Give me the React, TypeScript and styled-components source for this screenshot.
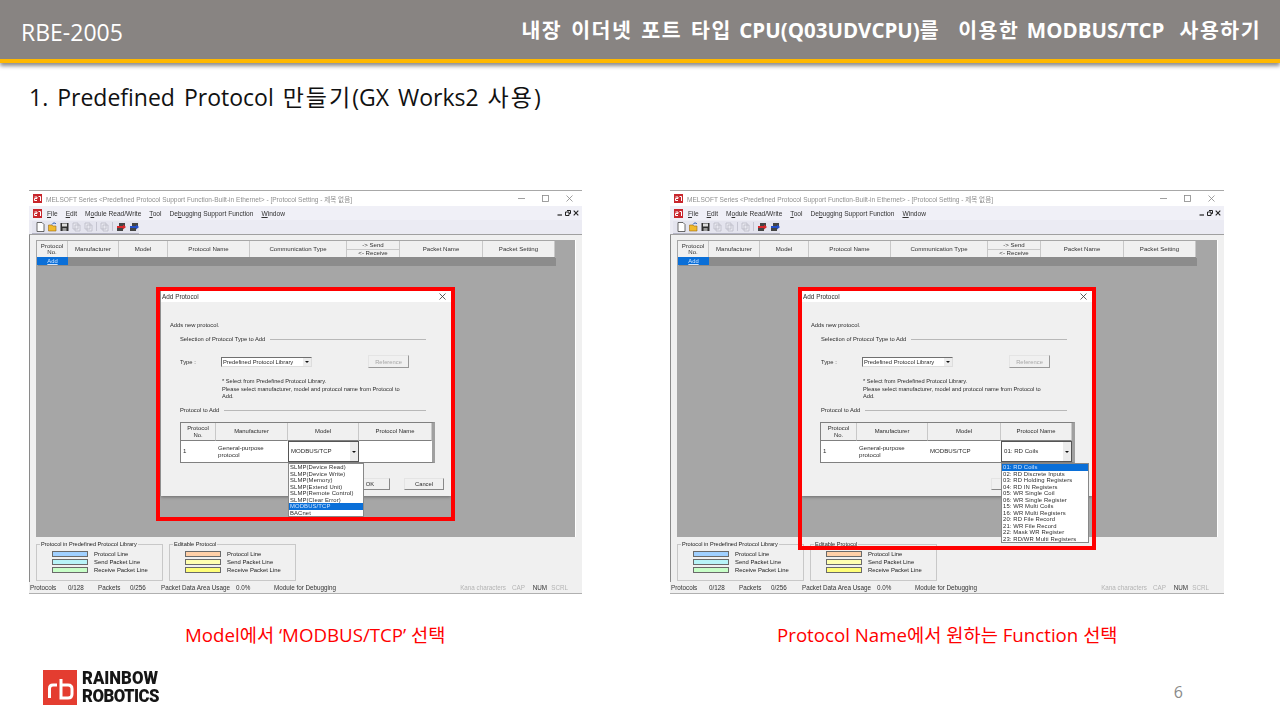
import React from 'react'
import styled, { createGlobalStyle } from 'styled-components'

const GlobalStyle = createGlobalStyle`
  html, body {
    margin: 0;
    padding: 0;
    background: #fff;
  }
  body {
    font-family: 'Open Sans', 'Noto Sans CJK KR', sans-serif;
  }
`

const Slide = styled.div`
  width: 1280px;
  height: 720px;
  overflow: hidden;
  display: flex;
  flex-direction: column;
`

const Header = styled.header`
  height: 59px;
  flex: none;
  background: #888482;
  border-bottom: 4px solid #ffb800;
  box-shadow: 0 3px 4px rgba(0, 0, 0, 0.45);
  display: flex;
  align-items: center;
  justify-content: space-between;
  padding: 0 19px 0 21px;
  color: #fff;
`

const DocCode = styled.div`
  font-size: 23px;
  margin-top: 4px;
`

const DocTitle = styled.div`
  font-size: 20.5px;
  font-weight: 700;
  margin-top: -2px;
  word-spacing: 2.2px;
  white-space: pre;
`

const Hangul = styled.span<{ $gap: number }>`
  letter-spacing: ${(p) => p.$gap}px;
`

const Heading = styled.h1`
  margin: 18px 0 0 29px;
  height: 32px;
  font-size: 23px;
  line-height: 32px;
  font-weight: 400;
  word-spacing: 3px;
  color: #111;
  white-space: pre;
`

const Figures = styled.main`
  margin-top: 77px;
  padding-left: 29px;
  display: flex;
  gap: 88px;
`

const Column = styled.section`
  display: flex;
  flex-direction: column;
`

const Shot = styled.div`
  position: relative;
`

const RedBox = styled.div<{ $tall?: boolean }>`
  position: absolute;
  left: ${(p) => (p.$tall ? 128 : 127)}px;
  top: 97px;
  width: ${(p) => (p.$tall ? 298 : 299)}px;
  height: ${(p) => (p.$tall ? 263 : 234)}px;
  border: 4px solid #ff0000;
  box-sizing: border-box;
`

const Caption = styled.p<{ $shift: number }>`
  margin: 29px 0 0 ${(p) => p.$shift}px;
  font-size: 18.7px;
  line-height: 24px;
  color: #ff0000;
  white-space: pre;
`

const Footer = styled.footer`
  margin-top: 22px;
  padding: 0 97px 0 43px;
  display: flex;
  align-items: center;
  justify-content: space-between;
`

const Logo = styled.div`
  display: flex;
  align-items: center;
  gap: 5px;
`

const LogoWords = styled.div`
  font-family: Roboto, 'Liberation Sans', sans-serif;
  font-weight: 900;
  font-size: 19px;
  line-height: 18px;
  color: #161616;
  transform: scaleX(0.88);
  transform-origin: left center;
`

const LogoLine = styled.div<{ $tight?: boolean }>`
  letter-spacing: ${(p) => (p.$tight ? -0.6 : 0)}px;
`

const PageNo = styled.div`
  font-size: 16px;
  color: #8a8a8a;
  margin-top: 10px;
`

/* captured MELSOFT window */

const Win = styled.div<{ $w: number }>`
  width: ${(p) => p.$w}px;
  height: 404px;
  display: flex;
  flex-direction: column;
  background: #f0f0f0;
  font-family: 'Liberation Sans', 'Noto Sans CJK KR', sans-serif;
  font-size: 6px;
  color: #222;
  border-top: 1px solid #a8a8a8;
  box-sizing: border-box;
  filter: blur(0.38px);
  white-space: nowrap;
`

const TitleBar = styled.div`
  height: 15px;
  flex: none;
  background: #fff;
  display: flex;
  align-items: center;
  padding: 0 9px 0 4px;
  gap: 4px;
  color: #909090;
  font-size: 6.55px;
`

const TitleText = styled.span`
  flex: 1;
`

const WinControls = styled.div`
  display: flex;
  gap: 17px;
`

const MenuBar = styled.div`
  height: 14px;
  flex: none;
  background: #f0f0f7;
  display: flex;
  align-items: center;
  padding: 0 3px 0 4px;
  font-size: 6.6px;
  color: #333;
`

const MenuItems = styled.div`
  flex: 1;
  display: flex;
  gap: 8px;
  margin-left: 5px;
`

const MdiControls = styled.div`
  display: flex;
  gap: 2px;
`

const ToolRow = styled.div`
  height: 15px;
  flex: none;
  background: #ebebf3;
  border-bottom: 1px solid #a0a0a0;
  box-sizing: border-box;
  display: flex;
  align-items: center;
  padding-left: 3px;
`

const ToolPill = styled.div`
  height: 13px;
  width: 107px;
  background: #e4e4ee;
  border-bottom: 1px solid #b4b4c4;
  box-sizing: border-box;
  display: flex;
  align-items: center;
  gap: 3px;
  padding-left: 4px;
`

const ToolSep = styled.span`
  width: 1px;
  height: 9px;
  background: #c4c4d0;
`

const Main = styled.div`
  flex: 1;
  min-height: 0;
  display: flex;
  padding: 5px 6px 0 6px;
  border-left: 1px solid #8a8a8a;
`

const Mdi = styled.div`
  position: relative;
  flex: 1;
  background: #a6a6a6;
  border-right: 1px solid #fff;
  padding-top: 1px;
`

const GridHead = styled.div`
  width: 518px;
  margin-left: 1px;
  height: 16px;
  display: flex;
  background: #f0f0f0;
`

const GridCol = styled.div<{ $w: number }>`
  width: ${(p) => p.$w}px;
  flex: none;
  box-sizing: border-box;
  border-right: 1px solid #c8c8c8;
  display: flex;
  flex-direction: column;
  align-items: center;
  justify-content: center;
  text-align: center;
  font-size: 6.1px;
  line-height: 6.4px;
  color: #333;
`

const SplitCell = styled.div`
  flex: 1;
  width: 100%;
  display: flex;
  align-items: center;
  justify-content: center;
  & + & {
    border-top: 1px solid #c8c8c8;
  }
`

const GridRow = styled.div`
  width: 518px;
  margin-left: 1px;
  height: 8px;
  display: flex;
  background: #8c8c8c;
  box-shadow: 1px 1px 0 #8c8c8c;
`

const AddCell = styled.div`
  width: 31px;
  background: #0a6fd8;
  color: #cfe4ff;
  text-align: center;
  font-size: 5.8px;
  line-height: 8px;
  text-decoration: underline;
`

const Dialog = styled.div`
  position: absolute;
  left: 125px;
  top: 50px;
  width: 290px;
  height: 206px;
  background: #f0f0f0;
  box-shadow: 0 1px 3px rgba(0, 0, 0, 0.35);
  color: #2c2c2c;
  font-size: 5.8px;
`

const DialogTitle = styled.div`
  height: 12px;
  background: #fff;
  display: flex;
  align-items: center;
  justify-content: space-between;
  padding: 0 5px 0 1px;
  font-size: 6.4px;
`

const DialogBody = styled.div`
  padding: 19px 7px 0 9px;
`

const Intro = styled.div`
  height: 8px;
  line-height: 8px;
`

const SectionTitle = styled.div<{ $top: number }>`
  height: 8px;
  line-height: 8px;
  margin: ${(p) => p.$top}px 18px 0 10px;
  display: flex;
  align-items: center;
  gap: 5px;
  &::after {
    content: '';
    flex: 1;
    height: 1px;
    background: #b8b8b8;
  }
`

const TypeRow = styled.div`
  margin: 13px 0 0 10px;
  height: 11px;
  display: flex;
  align-items: center;
`

const TypeLabel = styled.span`
  width: 41px;
`

const SelectBox = styled.div`
  width: 91px;
  height: 10px;
  background: #fff;
  box-sizing: border-box;
  border: 1px solid #707070;
  border-right-color: #ddd;
  border-bottom-color: #ddd;
  display: flex;
  align-items: center;
  justify-content: space-between;
  padding-left: 1px;
`

const Arrow = styled.span`
  width: 8px;
  height: 8px;
  background: #ececec;
  display: flex;
  align-items: center;
  justify-content: center;
  &::after {
    content: '';
    border: 2px solid transparent;
    border-top: 2.5px solid #111;
    border-bottom: 0;
  }
`

const RefButton = styled.div`
  width: 41px;
  height: 13px;
  margin-left: 56px;
  box-sizing: border-box;
  background: #f0f0f0;
  border: 1px solid #e4e4e4;
  border-right-color: #999;
  border-bottom-color: #999;
  color: #a8a8a8;
  display: flex;
  align-items: center;
  justify-content: center;
`

const Note = styled.div`
  margin: 11px 0 0 52px;
  font-size: 5.7px;
  line-height: 7.5px;
  white-space: pre;
`

const ProtoTable = styled.div<{ $left: number; $cols: string }>`
  margin: 8px 0 0 ${(p) => p.$left}px;
  width: 255px;
  height: 41px;
  box-sizing: border-box;
  border: 1px solid #808080;
  border-right: 3px solid #a0a0a0;
  display: grid;
  grid-template-columns: ${(p) => p.$cols};
  grid-template-rows: 18px 1fr;
  background: #fff;
`

const ProtoHead = styled.div`
  background: #f0f0f0;
  border-right: 1px solid #c8c8c8;
  border-bottom: 1px solid #808080;
  display: flex;
  align-items: center;
  justify-content: center;
  text-align: center;
  line-height: 6.4px;
  font-size: 5.9px;
`

const ProtoCell = styled.div`
  position: relative;
  display: flex;
  align-items: center;
  padding: 0 2px;
  line-height: 6.6px;
  font-size: 6.1px;
`

const Combo = styled.div`
  flex: 1;
  align-self: stretch;
  margin: 0 -2px;
  box-sizing: border-box;
  border: 1px solid #555;
  display: flex;
  align-items: center;
  justify-content: space-between;
  padding-left: 2px;
  & > span:last-child {
    width: 8px;
    height: 100%;
  }
`

const DropList = styled.ul<{ $w: number }>`
  position: absolute;
  left: 0;
  top: calc(100% + 1px);
  width: ${(p) => p.$w}px;
  margin: 0;
  padding: 0;
  list-style: none;
  background: #fff;
  border: 1px solid #888;
  box-sizing: border-box;
  z-index: 2;
  font-size: 5.9px;
  letter-spacing: 0.12px;
`

const DropItem = styled.li<{ $on?: boolean }>`
  height: 6.5px;
  line-height: 6.5px;
  padding-left: 1px;
  background: ${(p) => (p.$on ? '#0a6fd8' : 'transparent')};
  color: ${(p) => (p.$on ? '#cfe4ff' : '#2c2c2c')};
`

const DialogButtons = styled.div`
  margin-top: 15px;
  display: flex;
  justify-content: flex-end;
  gap: 14px;
`

const PushButton = styled.div`
  width: 40px;
  height: 12px;
  box-sizing: border-box;
  border: 1px solid #e4e4e4;
  border-right-color: #888;
  border-bottom-color: #888;
  display: flex;
  align-items: center;
  justify-content: center;
`

const DialogX = styled.svg`
  width: 7px;
  height: 7px;
`

const Legend = styled.div`
  height: 45px;
  flex: none;
  display: flex;
  gap: 6px;
  padding: 7px 0 0 6px;
  box-sizing: border-box;
  border-left: 1px solid #8a8a8a;
  font-size: 5.9px;
`

const GroupBox = styled.div`
  position: relative;
  width: 127px;
  height: 37px;
  box-sizing: border-box;
  border: 1px solid #c8c8c8;
  padding: 6px 0 0 15px;
  display: flex;
  flex-direction: column;
  gap: 2px;
`

const GroupLabel = styled.span`
  position: absolute;
  left: 3px;
  top: -4px;
  padding: 0 1px;
  font-size: 5.6px;
  line-height: 7px;
  background: #f0f0f0;
`

const LegendRow = styled.div`
  height: 6px;
  display: flex;
  align-items: center;
  gap: 6px;
`

const Swatch = styled.span<{ $color: string }>`
  width: 36px;
  height: 6px;
  box-sizing: border-box;
  border: 1px solid #6a6a6a;
  background: ${(p) => p.$color};
`

const StatusBar = styled.div`
  height: 11px;
  flex: none;
  display: flex;
  align-items: center;
  padding-left: 1px;
  border-bottom: 1px solid #b0b0b0;
  font-size: 6.3px;
  color: #555;
`

const StatusCell = styled.span<{ $w: number; $off?: boolean; $right?: boolean }>`
  width: ${(p) => p.$w}px;
  flex: none;
  color: ${(p) => (p.$off ? '#b4b4b4' : '#333')};
  text-align: ${(p) => (p.$right ? 'right' : 'left')};
`

const Underlined = styled.span`
  text-decoration: underline;
`

const MelsoftMark = () => (
  <svg width="9" height="9" viewBox="0 0 9 9">
    <rect width="9" height="9" fill="#c8262c" />
    <path d="M1.5 3H4V4.5H1.5V6.5H4M5.5 2.5H7.5V7" stroke="#fff" strokeWidth="1" fill="none" />
  </svg>
)

const ToolIcon = ({ kind }: { kind: string }) => {
  if (kind === 'new')
    return (
      <svg width="9" height="10" viewBox="0 0 9 10">
        <path d="M1 .5H6L8 2.5V9.5H1Z" fill="#fff" stroke="#444" strokeWidth=".8" />
      </svg>
    )
  if (kind === 'open')
    return (
      <svg width="9" height="10" viewBox="0 0 9 10">
        <path d="M.5 3H4L5 4H8V9H.5Z" fill="#f0b92c" stroke="#9a6a10" strokeWidth=".6" />
        <path d="M4 2.5C5 .5 7 .5 8 2" stroke="#2a5fb4" fill="none" />
      </svg>
    )
  if (kind === 'save')
    return (
      <svg width="9" height="10" viewBox="0 0 9 10">
        <rect x=".5" y="1" width="8" height="8" fill="#2e2e2e" />
        <rect x="2" y="1.5" width="5" height="3" fill="#ddd" />
        <rect x="2.5" y="6" width="4" height="3" fill="#999" />
      </svg>
    )
  if (kind === 'send' || kind === 'recv')
    return (
      <svg width="10" height="10" viewBox="0 0 10 10">
        <rect x="3" y="1" width="6" height="3" fill="#444" />
        <rect x="1" y="6" width="6" height="3" fill="#444" />
        <path d="M1 4H7V2.5L10 5 7 7.5V6H1Z" fill={kind === 'send' ? '#d8282c' : '#2450c8'} />
      </svg>
    )
  return (
    <svg width="9" height="10" viewBox="0 0 9 10">
      <path d="M1 1H6V7H1ZM3 3H8V9H3Z" fill="#e8e8f0" stroke="#b4b4c0" strokeWidth=".7" />
    </svg>
  )
}

const CloseGlyph = ({ color = '#555' }: { color?: string }) => (
  <DialogX viewBox="0 0 7 7">
    <path d="M.5 .5L6.5 6.5M6.5 .5L.5 6.5" stroke={color} strokeWidth=".8" />
  </DialogX>
)

const WinButtons = () => (
  <WinControls>
    <svg width="7" height="7" viewBox="0 0 7 7">
      <path d="M0 3.5H7" stroke="#888" strokeWidth=".8" />
    </svg>
    <svg width="7" height="7" viewBox="0 0 7 7">
      <rect x=".5" y=".5" width="6" height="6" fill="none" stroke="#888" strokeWidth=".8" />
    </svg>
    <CloseGlyph color="#888" />
  </WinControls>
)

const MdiButtons = () => (
  <MdiControls>
    <svg width="6" height="6" viewBox="0 0 6 6">
      <path d="M.5 5H5" stroke="#222" strokeWidth="1.2" />
    </svg>
    <svg width="6" height="6" viewBox="0 0 6 6">
      <path d="M2 .5H5.5V3.5H4M.5 2H4V5.5H.5Z" fill="none" stroke="#222" />
    </svg>
    <svg width="6" height="6" viewBox="0 0 6 6">
      <path d="M.7 .7L5.3 5.3M5.3 .7L.7 5.3" stroke="#222" strokeWidth="1.1" />
    </svg>
  </MdiControls>
)

const columns = [
  { w: 31, label: 'Protocol\nNo.' },
  { w: 51, label: 'Manufacturer' },
  { w: 49, label: 'Model' },
  { w: 82, label: 'Protocol Name' },
  { w: 97, label: 'Communication Type' },
  { w: 53, label: '' },
  { w: 83, label: 'Packet Name' },
  { w: 72, label: 'Packet Setting' },
]

const modelList = [
  'SLMP(Device Read)',
  'SLMP(Device Write)',
  'SLMP(Memory)',
  'SLMP(Extend Unit)',
  'SLMP(Remote Control)',
  'SLMP(Clear Error)',
  'MODBUS/TCP',
  'BACnet',
]

const functionList = [
  '01: RD Coils',
  '02: RD Discrete Inputs',
  '03: RD Holding Registers',
  '04: RD IN Registers',
  '05: WR Single Coil',
  '06: WR Single Register',
  '15: WR Multi Coils',
  '16: WR Multi Registers',
  '20: RD File Record',
  '21: WR File Record',
  '22: Mask WR Register',
  '23: RD/WR Multi Registers',
]

const legendLines = ['Protocol Line', 'Send Packet Line', 'Receive Packet Line']

const Group = ({ title, colors }: { title: string; colors: string[] }) => (
  <GroupBox>
    <GroupLabel>{title}</GroupLabel>
    {legendLines.map((line, i) => (
      <LegendRow key={line}>
        <Swatch $color={colors[i]} />
        {line}
      </LegendRow>
    ))}
  </GroupBox>
)

const Drop = ({ items, active, w }: { items: string[]; active: string; w: number }) => (
  <DropList $w={w}>
    {items.map((item) => (
      <DropItem key={item} $on={item === active}>
        {item}
      </DropItem>
    ))}
  </DropList>
)

const MelsoftWindow = ({ step, width }: { step: 'model' | 'name'; width: number }) => (
  <Win $w={width}>
    <TitleBar>
      <MelsoftMark />
      <TitleText>
        MELSOFT Series &lt;Predefined Protocol Support Function-Built-in Ethernet&gt; - [Protocol Setting - 제목 없음]
      </TitleText>
      <WinButtons />
    </TitleBar>
    <MenuBar>
      <MelsoftMark />
      <MenuItems>
        <span>
          <Underlined>F</Underlined>ile
        </span>
        <span>
          <Underlined>E</Underlined>dit
        </span>
        <span>
          M<Underlined>o</Underlined>dule Read/Write
        </span>
        <span>
          <Underlined>T</Underlined>ool
        </span>
        <span>
          De<Underlined>b</Underlined>ugging Support Function
        </span>
        <span>
          <Underlined>W</Underlined>indow
        </span>
      </MenuItems>
      <MdiButtons />
    </MenuBar>
    <ToolRow>
      <ToolPill>
        <ToolIcon kind="new" />
        <ToolIcon kind="open" />
        <ToolIcon kind="save" />
        <ToolIcon kind="gray" />
        <ToolIcon kind="gray" />
        <ToolSep />
        <ToolIcon kind="gray" />
        <ToolSep />
        <ToolIcon kind="send" />
        <ToolIcon kind="recv" />
      </ToolPill>
    </ToolRow>
    <Main>
      <Mdi>
        <GridHead>
          {columns.map((col) => (
            <GridCol key={col.w + col.label} $w={col.w}>
              {col.label ? (
                col.label.split('\n').map((part) => <span key={part}>{part}</span>)
              ) : (
                <>
                  <SplitCell>-&gt; Send</SplitCell>
                  <SplitCell>&lt;- Receive</SplitCell>
                </>
              )}
            </GridCol>
          ))}
        </GridHead>
        <GridRow>
          <AddCell>Add</AddCell>
        </GridRow>
        <Dialog>
          <DialogTitle>
            <span>Add Protocol</span>
            <CloseGlyph color="#333" />
          </DialogTitle>
          <DialogBody>
            <Intro>Adds new protocol.</Intro>
            <SectionTitle $top={6}>Selection of Protocol Type to Add</SectionTitle>
            <TypeRow>
              <TypeLabel>Type :</TypeLabel>
              <SelectBox>
                Predefined Protocol Library
                <Arrow />
              </SelectBox>
              <RefButton>Reference</RefButton>
            </TypeRow>
            <Note>
              {'* Select from Predefined Protocol Library.\nPlease select manufacturer, model and protocol name from Protocol to\nAdd.'}
            </Note>
            <SectionTitle $top={5.5}>Protocol to Add</SectionTitle>
            <ProtoTable
              $left={step === 'model' ? 10 : 9}
              $cols={step === 'model' ? '35px 72px 71px 1fr' : '36px 71px 73px 1fr'}
            >
              <ProtoHead>
                Protocol
                <br />
                No.
              </ProtoHead>
              <ProtoHead>Manufacturer</ProtoHead>
              <ProtoHead>Model</ProtoHead>
              <ProtoHead>Protocol Name</ProtoHead>
              <ProtoCell>1</ProtoCell>
              <ProtoCell>
                <span>
                  General-purpose
                  <br />
                  protocol
                </span>
              </ProtoCell>
              <ProtoCell>
                {step === 'model' ? (
                  <>
                    <Combo>
                      MODBUS/TCP
                      <Arrow />
                    </Combo>
                    <Drop items={modelList} active="MODBUS/TCP" w={76} />
                  </>
                ) : (
                  'MODBUS/TCP'
                )}
              </ProtoCell>
              <ProtoCell>
                {step === 'name' && (
                  <>
                    <Combo>
                      01: RD Coils
                      <Arrow />
                    </Combo>
                    <Drop items={functionList} active="01: RD Coils" w={88} />
                  </>
                )}
              </ProtoCell>
            </ProtoTable>
            {/* on the second capture the open list covers both button captions */}
            <DialogButtons>
              <PushButton>{step === 'model' && 'OK'}</PushButton>
              <PushButton>{step === 'model' && 'Cancel'}</PushButton>
            </DialogButtons>
          </DialogBody>
        </Dialog>
      </Mdi>
    </Main>
    <Legend>
      <Group title="Protocol in Predefined Protocol Library" colors={['#a0d0ff', '#b8f4f8', '#c8ffc8']} />
      <Group title="Editable Protocol" colors={['#ffd0a8', '#ffffb0', '#ffff78']} />
    </Legend>
    <StatusBar>
      <StatusCell $w={38}>Protocols</StatusCell>
      <StatusCell $w={30}>0/128</StatusCell>
      <StatusCell $w={32}>Packets</StatusCell>
      <StatusCell $w={31}>0/256</StatusCell>
      <StatusCell $w={75}>Packet Data Area Usage</StatusCell>
      <StatusCell $w={38}>0.0%</StatusCell>
      <StatusCell $w={164}>Module for Debugging</StatusCell>
      <StatusCell $w={68} $off $right>
        Kana characters
      </StatusCell>
      <StatusCell $w={19} $off $right>
        CAP
      </StatusCell>
      <StatusCell $w={22} $right>
        NUM
      </StatusCell>
      <StatusCell $w={21} $off $right>
        SCRL
      </StatusCell>
    </StatusBar>
  </Win>
)

export default function App() {
  return (
    <Slide>
      <GlobalStyle />
      <Header>
        <DocCode>RBE-2005</DocCode>
        <DocTitle>
          <Hangul $gap={1.5}>내장 이더넷 포트 타입</Hangul> CPU(Q03UDVCPU)<Hangul $gap={1.5}>를  이용한</Hangul> MODBUS/TCP{'  '}
          <Hangul $gap={1.5}>사용하기</Hangul>
        </DocTitle>
      </Header>
      <Heading>
        1. Predefined Protocol <Hangul $gap={2}>만들기</Hangul>(GX Works2 <Hangul $gap={2}>사용</Hangul>)
      </Heading>
      <Figures>
        <Column>
          <Shot>
            <MelsoftWindow step="model" width={553} />
            <RedBox />
          </Shot>
          <Caption $shift={156}>Model에서 ‘MODBUS/TCP’ 선택</Caption>
        </Column>
        <Column>
          <Shot>
            <MelsoftWindow step="name" width={554} />
            <RedBox $tall />
          </Shot>
          <Caption $shift={107}>Protocol Name에서 원하는 Function 선택</Caption>
        </Column>
      </Figures>
      <Footer>
        <Logo>
          <svg width="34" height="35" viewBox="0 0 34 35">
            <rect width="34" height="35" fill="#e43d30" />
            <path
              d="M6.5 28V18.5Q6.5 15 10 15H14M18 9V28H25Q29 28 29 24V19Q29 15 25 15H18"
              fill="none"
              stroke="#fff"
              strokeWidth="3"
            />
          </svg>
          <LogoWords>
            <LogoLine>RAINBOW</LogoLine>
            <LogoLine $tight>ROBOTICS</LogoLine>
          </LogoWords>
        </Logo>
        <PageNo>6</PageNo>
      </Footer>
    </Slide>
  )
}
